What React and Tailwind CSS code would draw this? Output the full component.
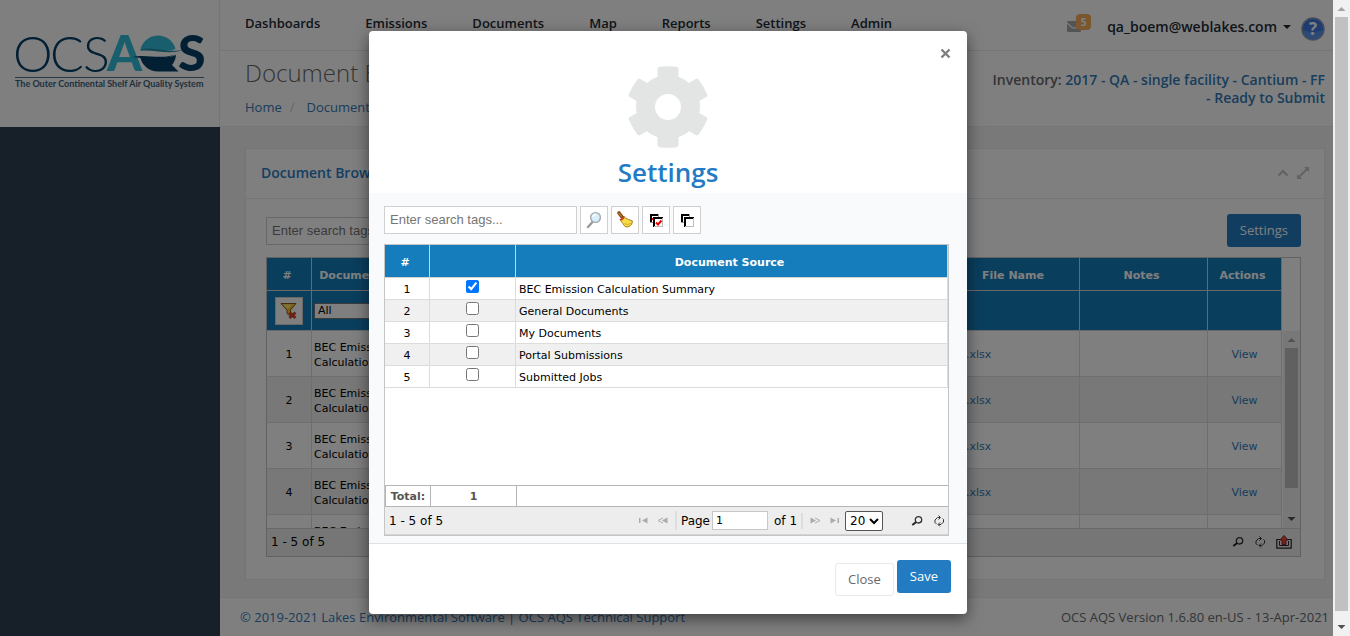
import React from 'react';

const NAV = ['Dashboards', 'Emissions', 'Documents', 'Map', 'Reports', 'Settings', 'Admin'];

const SOURCES = [
  'BEC Emission Calculation Summary',
  'General Documents',
  'My Documents',
  'Portal Submissions',
  'Submitted Jobs',
];

function Logo() {
  return (
    <svg className="overflow-visible" width="190" height="58" viewBox="0 0 190 58" role="img" aria-label="OCS AQS">
      <g fontFamily="Lato, sans-serif" fontSize="50" fill="#063f66">
        <text x="-2 35 68" y="38" fontWeight="300">OCS</text>
        <text x="92" y="37" fontWeight="900" fill="#30bcd9">A</text>
        <text x="163" y="37" fontWeight="900">S</text>
      </g>
      <path d="M125.300 16.500A18 18 0 0 1 160.500 15C150 19 140 14 125.300 16.500z" fill="#30bcd9" />
      <path d="M126 15.500C140 11.500 152 20 170 15.500C155 21.500 142 15.500 126 16.500z" fill="#2790ae" />
      <path d="M125.200 23C135 21.500 148 26.500 161 21A18 18 0 0 1 157 31L163.500 37.500H143A18 18 0 0 1 125.200 23z" fill="#063f66" />
      <path d="M118 23C130 19.500 145 26 161 20.500C148 26.500 135 25 118 23z" fill="#063f66" />
      <path d="M0 43.500h189" stroke="#4f7187" />
      <text x="0" y="53" fontFamily="Lato, sans-serif" fontSize="9" fontWeight="700" fill="#3a627e">
        The Outer Continental Shelf Air Quality System
      </text>
    </svg>
  );
}

function Gear() {
  return (
    <svg width="82" height="82" viewBox="-41 -41 82 82" fill="#e2e5e4" aria-hidden="true">
      <circle r="32" />
      <path id="tooth" d="M-10.500 -38q0 -2 2 -2.300q8.500 -1 17 0q2 .3 2 2.300v76q0 2 -2 2.300q-8.500 1 -17 0q-2 -.3 -2 -2.300z" />
      <use href="#tooth" transform="rotate(60)" />
      <use href="#tooth" transform="rotate(120)" />
      <circle r="13" fill="#fff" />
    </svg>
  );
}

function Magnifier() {
  return (
    <svg width="18" height="18" viewBox="0 0 18 18" aria-hidden="true">
      <path d="M7.500 11L3 16" stroke="#9a9a9a" strokeWidth="2.400" strokeLinecap="round" />
      <circle cx="10.500" cy="6.500" r="4.900" fill="#d9eefb" stroke="#a3a9ae" strokeWidth="1.400" />
      <path d="M8 6a3 3 0 0 1 3 -2.500" stroke="#fff" strokeWidth="1.400" fill="none" />
    </svg>
  );
}

function Broom() {
  return (
    <svg width="18" height="18" viewBox="0 0 18 18" aria-hidden="true">
      <path d="M3 2L6 6" stroke="#8a4f16" strokeWidth="3.600" strokeLinecap="round" />
      <path d="M2.500 1.800L5.500 5.500" stroke="#c58a3a" strokeWidth="1" />
      <path d="M8.500 6.500Q12 8.500 16.500 10Q16.500 14 13 15.500Q11 16.500 9 15.500Q7 12.500 4.500 9.500Q7.500 9 8.500 6.500z" fill="#f6dc4c" stroke="#a98310" strokeWidth="1" />
      <path d="M8.500 12.500q3 2.500 7 -.5" stroke="#d5b02c" fill="none" />
      <path d="M3.800 8.800Q7.500 8.500 8 5" stroke="#d03a1c" strokeWidth="1.500" fill="none" />
    </svg>
  );
}

function Boxes({ checked }) {
  return (
    <svg width="14" height="14" viewBox="0 0 14 14" fill="none" shapeRendering="crispEdges" aria-hidden="true">
      <path d="M2 10V2H10" stroke="#000" strokeWidth="2" />
      <path d="M1 9.500h3M9.500 1v3" stroke="#9a9a9a" />
      <path d="M4.500 4.500H13.500V13.500H4.500z" fill="#fff" stroke="#bcbcbc" />
      <path d="M5.500 13V5.500H13" stroke="#000" strokeWidth="1" />
      <path d="M4.500 14V4.500H14" stroke="#000" strokeWidth="1" />
      {checked && <path d="M7 9.500l2 2l3.500 -4" stroke="#f00000" strokeWidth="2" shapeRendering="auto" />}
      {checked && <path d="M3.500 5v2" stroke="#f00000" />}
    </svg>
  );
}

function FilterClear() {
  return (
    <svg width="18" height="18" viewBox="0 0 18 18" aria-hidden="true">
      <path d="M1 1.500h15l-5.500 6.500v6l-3.500 -2.500v-3.500z" fill="#f2c21e" stroke="#8a5a10" />
      <path d="M3 2.500h9l-4.500 4.500z" fill="#ffe983" />
      <path d="M9.500 10.500l6 5.500M15.500 10.500l-6 5.500" stroke="#d8402a" strokeWidth="3" />
    </svg>
  );
}

function SearchSmall() {
  return (
    <svg width="12" height="12" viewBox="0 0 12 12" fill="none" aria-hidden="true">
      <circle cx="7.500" cy="4.800" r="3.200" stroke="#333" strokeWidth="1.300" />
      <path d="M5.200 7L1.300 10" stroke="#222" strokeWidth="2" />
    </svg>
  );
}

function RefreshSmall() {
  return (
    <svg width="12" height="12" viewBox="0 0 12 12" fill="none" stroke="#333" aria-hidden="true">
      <path d="M7 2.500H4.500L2 5V7.500L3.500 9M5.500 9.500H8L10.500 7V4.500L9.500 3.500" />
      <path d="M5.500 .5L7.500 2.500L5.500 4.500M7 7.500L5 9.500L7 11.500" />
    </svg>
  );
}

function ExportIcon() {
  return (
    <svg width="16" height="14" viewBox="0 0 16 14" aria-hidden="true">
      <path d="M4 4.500H.8V13.200H15.200V4.500H12" fill="none" stroke="#26262e" strokeWidth="1.200" />
      <path d="M3.500 6v4.500h9V6" fill="none" stroke="#26262e" />
      <path d="M8 .5L12 5H10V9.500H6V5H4z" fill="#f0483a" stroke="#5a1410" strokeWidth=".8" />
    </svg>
  );
}

function PagerArrow({ kind }) {
  const flip = kind === 'next' || kind === 'last';
  const edge = kind === 'first' || kind === 'last';
  return (
    <svg width="12" height="7" viewBox="0 0 12 7" fill="#ababab" aria-hidden="true">
      <g transform={flip ? 'matrix(-1 0 0 1 12 0)' : undefined}>
        {edge ? <path d="M2 1h1.500v5H2z" /> : <path d="M6 1L1 3.500L6 6" fill="none" stroke="#ababab" />}
        <path d="M10.500 .5v6L5 3.500z" />
      </g>
    </svg>
  );
}

function IconButton({ label, children }) {
  return (
    <button aria-label={label} className="flex size-7 items-center justify-center border border-[#d0d0d0] bg-white">
      {children}
    </button>
  );
}

function ScrollBar({ className, upColor, thumb }) {
  return (
    <div aria-hidden="true" className={'flex flex-col items-center bg-[#f1f1f1] ' + className}>
      <svg className="shrink-0" width="17" height="17" viewBox="0 0 17 17"><path d="M4.500 11h8l-4 -4z" fill={upColor} /></svg>
      <div className={'w-[13px] bg-[#c1c1c1] ' + thumb} />
      <div className="flex-1" />
      <svg className="shrink-0" width="17" height="17" viewBox="0 0 17 17"><path d="M4.500 6h8l-4 4z" fill="#505050" /></svg>
    </div>
  );
}

function Page() {
  const th = 'h-[33px] border-r border-b border-[#d3d3d3] bg-[#157dbb] pt-0.5 pr-1 pb-0 pl-0 text-center font-bold text-white';
  const filter = 'h-10 border-r border-b border-[#d3d3d3] bg-[#157dbb] p-0';
  return (
    <div className="flex min-h-screen">
      <aside className="w-[220px] shrink-0 bg-[#2f4050]">
        <div className="h-[127px] border-r border-[#e7eaec] bg-white pt-[34px] pl-[15px]">
          <Logo />
        </div>
      </aside>
      <div className="flex min-w-0 flex-1 flex-col bg-[#f3f3f4]">
        <header className="flex h-[51px] items-start justify-between border-b border-[#e7eaec] bg-white pr-2 pl-[25px]">
          <nav className="flex gap-[45px] pt-3 text-[13px] leading-[22px] font-semibold text-[#222b35]">
            {NAV.map((n) => <a key={n} href="#">{n}</a>)}
          </nav>
          <div className="flex items-start pt-[15px] text-[#222b35]">
            <a href="#" aria-label="5 messages" className="relative mr-4 block h-6 w-6">
              <svg width="14" height="11" viewBox="0 0 14 11" className="mt-1.5">
                <rect width="14" height="11" rx="1" fill="#a5a9ad" />
                <path d="M0 2l5.500 5h3L14 2" fill="none" stroke="#fff" strokeWidth="1.200" />
              </svg>
              <span className="absolute -top-px right-0 flex h-4 w-[15px] items-center justify-center rounded-sm bg-[#f8ac59] text-[10px] font-bold text-white">5</span>
            </a>
            <a href="#" className="flex items-center text-sm leading-6 font-semibold">
              qa_boem@weblakes.com
              <svg width="8" height="4" viewBox="0 0 8 4" className="ml-1.5"><path d="M0 0h8L4 4z" fill="#222b35" /></svg>
            </a>
            <a href="#" aria-label="Help" className="mt-0.5 ml-2.5">
              <svg width="24" height="24" viewBox="0 0 24 24">
                <circle cx="12" cy="12" r="11" fill="#3b78e0" stroke="#8f9bb5" strokeWidth="1.500" />
                <path d="M2 13a10 9.500 0 0 0 20 0q-10 4 -20 0z" fill="#6fa4f4" opacity=".6" />
                <text x="12" y="18" textAnchor="middle" fontSize="17" fontWeight="700" fill="#fff" fontFamily="Open Sans, sans-serif">?</text>
              </svg>
            </a>
          </div>
        </header>
        <div className="flex h-[76px] justify-between border-b border-[#e7eaec] bg-white pr-2 pl-[25px] text-[#676a6c]">
          <div>
            <h1 className="pt-1.5 text-2xl font-light">Document Browser</h1>
            <nav aria-label="Breadcrumb" className="flex pt-2 text-[13px] leading-5 text-[#337ab7]">
              <a href="#">Home</a>
              <span className="px-2 text-[#ccc]">/</span>
              <a href="#" className="pl-1">Document Browser</a>
            </nav>
          </div>
          <p className="w-[335px] pt-5 text-right text-sm leading-[18px] font-semibold">
            Inventory: <a href="#" className="text-[#337ab7]">2017 - QA - single facility - Cantium - FF - Ready to Submit</a>
          </p>
        </div>

        <section className="mt-[21px] mr-2 ml-[25px] border border-[#e7eaec] bg-white">
          <div className="flex h-[50px] items-center justify-between border-b border-[#e7eaec] px-[15px] pb-0.5">
            <h2 className="text-sm font-semibold text-[#2a7dc4]">Document Browser</h2>
            <div className="flex items-center gap-2">
              <svg width="12" height="8" viewBox="0 0 12 8"><path d="M1.500 6.500L6 2l4.500 4.500" fill="none" stroke="#c4c4c4" strokeWidth="2.200" /></svg>
              <svg width="12" height="12" viewBox="0 0 12 12"><path d="M7 0h5v5zM0 7v5h5z" fill="#c4c4c4" /><path d="M2 10L10 2" stroke="#c4c4c4" strokeWidth="2" /></svg>
            </div>
          </div>
          <div className="pt-[15px] pr-[23px] pb-[22px] pl-5">
            <div className="mb-2.5 flex items-center justify-between">
              <input aria-label="Search tags" placeholder="Enter search tags..." className="h-7 w-[192px] border border-[#d0d0d0] px-[5px] font-['Liberation_Sans',sans-serif] text-[13px] placeholder:text-[#757575]" />
              <button className="h-[33px] rounded-[3px] bg-[#237bc1] px-[13px] text-[13px] text-white">Settings</button>
            </div>
            <div className="border border-[#c5c5c5] font-['DejaVu_Sans',sans-serif] text-[11px] leading-[15px]">
              <div className="flex h-[270px] overflow-hidden">
                <div className="min-w-0 flex-1">
                  <table className="w-full table-fixed border-separate border-spacing-0">
                    <colgroup>
                      <col className="w-[45px]" /><col className="w-[129px]" /><col /><col className="w-[129px]" /><col className="w-[128px]" /><col className="w-[74px]" />
                    </colgroup>
                    <thead>
                      <tr>
                        {['#', 'Document Source', '', 'File Name', 'Notes', 'Actions'].map((h, i) => <th key={i} className={th}>{h}</th>)}
                      </tr>
                      <tr>
                        <td className={filter}><div className="flex justify-center"><IconButton label="Clear filter"><FilterClear /></IconButton></div></td>
                        <td className={filter}>
                          <select aria-label="Document source filter" className="ml-0.5 block h-4 w-[118px] appearance-none border border-[#767676] bg-white pl-[3px] leading-[14px]"><option>All</option></select>
                        </td>
                        <td className={filter} /><td className={filter} /><td className={filter} /><td className={filter} />
                      </tr>
                    </thead>
                    <tbody>
                      {[1, 2, 3, 4, 5].map((n) => {
                        const td = 'h-[46px] border-r border-b border-[#dcdcdc] pt-0.5 pr-0 pb-0 pl-0 ' + (n % 2 ? 'bg-white' : 'bg-[#f0f0f0]');
                        return (
                          <tr key={n} className="text-black">
                            <td className={td + ' text-center'}>{n}</td>
                            <td className={td}><div className="pl-0.5">BEC Emission Calculation Summary</div></td>
                            <td className={td} />
                            <td className={td}><a href="#" className="pl-px text-[#337ab7]">01.xlsx</a></td>
                            <td className={td} />
                            <td className={td + ' text-center'}><a href="#" className="text-[#337ab7]">View</a></td>
                          </tr>
                        );
                      })}
                    </tbody>
                  </table>
                </div>
                <div className="flex w-[18px] justify-end pt-[73px]">
                  <ScrollBar className="w-[17px]" upColor="#a3a3a3" thumb="h-[140px]" />
                </div>
              </div>
              <div className="flex h-7 items-center justify-between border-t border-[#d3d3d3] bg-[#ededed] pr-2 pb-0.5 pl-1 text-xs text-black">
                <span>1 - 5 of 5</span>
                <div className="flex items-center gap-2.5">
                  <button aria-label="Find"><SearchSmall /></button>
                  <button aria-label="Reload"><RefreshSmall /></button>
                  <button aria-label="Export"><ExportIcon /></button>
                </div>
              </div>
            </div>
          </div>
        </section>

        <footer className="mt-[17px] flex flex-1 items-start justify-between border-t border-[#e7eaec] bg-white pt-[9px] pr-1 pl-5 text-[13px] leading-5 text-[#676a6c]">
          <p className="text-[#337ab7]"><a href="#">© 2019-2021 Lakes Environmental Software</a> | <a href="#">OCS AQS Technical Support</a></p>
          <p>OCS AQS Version 1.6.80 en-US - 13-Apr-2021</p>
        </footer>
      </div>
    </div>
  );
}

function SettingsDialog() {
  const th = 'h-[33px] border-r border-b border-[#d3d3d3] bg-[#157dbb] pt-0.5 pr-1 pb-0 pl-0 font-bold text-white';
  return (
    <div role="dialog" aria-modal="true" aria-labelledby="dialog-title" className="w-[598px] self-start overflow-hidden rounded-[4px] bg-white shadow-[0_5px_15px_rgba(0,0,0,0.5)]">
      <div className="relative flex h-[162px] flex-col items-center pt-[35px]">
        <Gear />
        <h2 id="dialog-title" className="pt-1.5 text-[26px] leading-9 font-semibold text-[#237bc6]">Settings</h2>
        <button aria-label="Close dialog" className="absolute top-[17px] right-4">
          <svg width="11" height="11" viewBox="0 0 11 11"><path d="M1.500 1.500l8 8M9.500 1.500l-8 8" stroke="#7f7f7f" strokeWidth="2.400" /></svg>
        </button>
      </div>
      <div className="border-b border-[#dfe3e6] bg-[#f8fafb] pt-[13px] pr-[18px] pb-[7px] pl-[15px]">
        <div className="mb-2.5 flex gap-[3px]">
          <input aria-label="Search document sources" placeholder="Enter search tags..." className="h-7 w-[193px] border border-[#d0d0d0] bg-white px-[5px] pb-0.5 font-['Liberation_Sans',sans-serif] text-[13px] placeholder:text-[#757575]" />
          <IconButton label="Search"><Magnifier /></IconButton>
          <IconButton label="Clear search"><Broom /></IconButton>
          <IconButton label="Select all"><Boxes checked /></IconButton>
          <IconButton label="Select none"><Boxes /></IconButton>
        </div>
        <div className="border border-[#c5c5c5] bg-white font-['DejaVu_Sans',sans-serif] text-[11px] leading-[15px]">
          <div className="h-60">
            <table className="w-full table-fixed border-separate border-spacing-0">
              <colgroup><col className="w-[45px]" /><col className="w-[86px]" /><col /></colgroup>
              <thead>
                <tr><th className={th}>#</th><th className={th}></th><th className={th}>Document Source</th></tr>
              </thead>
              <tbody>
                {SOURCES.map((s, i) => {
                  const td = 'h-[22px] border-r border-b border-[#dcdcdc] pr-0 pb-0 pl-0 ' + (i % 2 ? 'bg-[#f0f0f0]' : 'bg-white');
                  return (
                    <tr key={s} className="text-black">
                      <td className={td + ' pt-0.5 text-center'}>{i + 1}</td>
                      <td className={td + ' pt-0'}><input id={'source-' + i} type="checkbox" defaultChecked={i === 0} className="mx-auto mb-1 block size-[13px]" /></td>
                      <td className={td + ' pt-0.5'}><label htmlFor={'source-' + i} className="block pl-[3px]">{s}</label></td>
                    </tr>
                  );
                })}
              </tbody>
            </table>
          </div>
          <div className="flex h-[22px] border-y border-[#b5b5b5] text-center leading-[21px] font-bold text-[#555]">
            <div className="w-[46px] border-x border-[#b5b5b5]">Total:</div>
            <div className="w-[86px] border-r border-[#b5b5b5]">1</div>
          </div>
          <div className="flex h-7 items-center justify-between border-b border-[#d3d3d3] bg-[#ededed] pr-[3px] pl-1 text-xs text-black">
            <span className="w-[220px]">1 - 5 of 5</span>
            <div className="flex items-center">
              <button aria-label="First page" className="mr-2"><PagerArrow kind="first" /></button>
              <button aria-label="Previous page" className="mr-1.5"><PagerArrow kind="prev" /></button>
              <label className="flex items-center gap-0.5 border-l-2 border-[#ddd] pl-1">Page
                <input defaultValue="1" className="h-[19px] w-14 border border-[#c8c8c8] bg-white px-[3px] text-[11px]" />
              </label>
              <span className="mr-1.5 border-r-2 border-[#ddd] pr-1 pl-1.5">of 1</span>
              <button aria-label="Next page" className="mr-2"><PagerArrow kind="next" /></button>
              <button aria-label="Last page" className="mr-1"><PagerArrow kind="last" /></button>
              <select aria-label="Rows per page" className="h-5 w-[38px] rounded-[2px] border border-[#555] bg-white font-['DejaVu_Sans',sans-serif] text-xs"><option>20</option></select>
            </div>
            <div className="flex gap-2.5">
              <button aria-label="Find rows"><SearchSmall /></button>
              <button aria-label="Reload rows"><RefreshSmall /></button>
            </div>
          </div>
        </div>
      </div>
      <div className="flex h-[70px] items-start justify-end gap-[3px] pt-4 pr-4 text-[13px]">
        <button className="mt-[3px] h-[33px] rounded-[3px] border border-[#e7eaec] bg-white px-3 text-[#676a6c]">Close</button>
        <button className="h-[33px] rounded-[3px] bg-[#237bc1] px-[13px] text-white">Save</button>
      </div>
    </div>
  );
}

export default function App() {
  return (
    <div className="flex min-h-screen font-['Open_Sans',sans-serif]">
      <div className="relative min-w-0 flex-1">
        <Page />
        <div className="absolute inset-0 flex justify-center bg-black/50 pt-[31px] pl-[3px]">
          <SettingsDialog />
        </div>
      </div>
      <ScrollBar className="w-[17px]" upColor="#a3a3a3" thumb="h-[594px]" />
    </div>
  );
}
